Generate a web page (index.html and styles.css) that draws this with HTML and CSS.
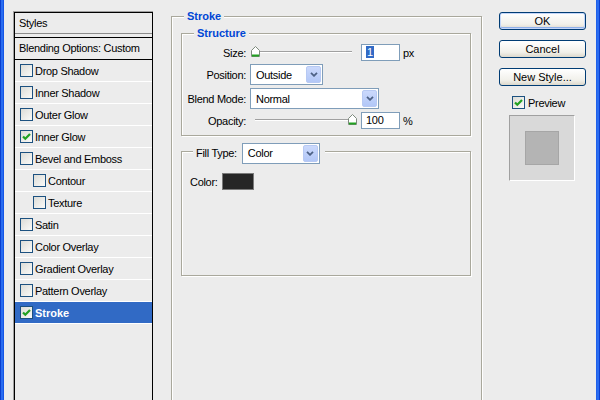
FILE: index.html
```html
<!DOCTYPE html>
<html lang="en">
<head>
    <meta charset="UTF-8">
    <title>Layer Style</title>
    <link rel="stylesheet" href="styles.css">
</head>
<body>
    <div class="window">
        <!-- list of effects -->
        <div class="styles-col">
            <div class="styles-list">
                <div class="styles-head">Styles</div>
                <div class="styles-blend">Blending Options: Custom</div>
                <div class="style-item"><span class="check"></span>Drop Shadow</div>
                <div class="style-item"><span class="check"></span>Inner Shadow</div>
                <div class="style-item"><span class="check"></span>Outer Glow</div>
                <div class="style-item"><span class="check"><svg width="11" height="11" viewBox="0 0 11 11"><path d="M2 5.5 L4.3 7.8 L9 3" fill="none" stroke="#21a121" stroke-width="2.2"/></svg></span>Inner Glow</div>
                <div class="style-item"><span class="check"></span>Bevel and Emboss</div>
                <div class="style-item style-sub"><span class="check"></span>Contour</div>
                <div class="style-item style-sub"><span class="check"></span>Texture</div>
                <div class="style-item"><span class="check"></span>Satin</div>
                <div class="style-item"><span class="check"></span>Color Overlay</div>
                <div class="style-item"><span class="check"></span>Gradient Overlay</div>
                <div class="style-item"><span class="check"></span>Pattern Overlay</div>
                <div class="style-item is-selected"><span class="check"><svg width="11" height="11" viewBox="0 0 11 11"><path d="M2 5.5 L4.3 7.8 L9 3" fill="none" stroke="#21a121" stroke-width="2.2"/></svg></span>Stroke</div>
            </div>
        </div>

        <!-- stroke options -->
        <div class="options-col">
            <div class="group group-stroke">
                <div class="group-title">Stroke</div>
                <div class="group group-structure">
                    <div class="group-title">Structure</div>
                    <div class="field-grid">
                        <div class="field-label">Size:</div>
                        <div class="field-row">
                            <div class="slider">
                                <div class="slider-track">
                                    <svg class="slider-thumb" style="left: 0%" width="9" height="11" viewBox="0 0 9 11"><path d="M0.5 10.5 V4.5 L4.5 0.5 L8.5 4.5 V10.5 Z" fill="#fff" stroke="#7d8a7d"/><path d="M1 9.5 H8" stroke="#21a121" stroke-width="2"/></svg>
                                </div>
                            </div>
                            <div class="num-input"><span class="sel">1</span></div>
                            <span class="unit">px</span>
                        </div>

                        <div class="field-label">Position:</div>
                        <div class="field-row">
                            <div class="select select-position">
                                <span class="select-text">Outside</span>
                                <span class="select-btn"><svg width="8" height="5" viewBox="0 0 8 5"><path d="M1 0.8 L4 3.8 L7 0.8" fill="none" stroke="#4d6185" stroke-width="1.8"/></svg></span>
                            </div>
                        </div>

                        <div class="field-label">Blend Mode:</div>
                        <div class="field-row">
                            <div class="select select-blend">
                                <span class="select-text">Normal</span>
                                <span class="select-btn"><svg width="8" height="5" viewBox="0 0 8 5"><path d="M1 0.8 L4 3.8 L7 0.8" fill="none" stroke="#4d6185" stroke-width="1.8"/></svg></span>
                            </div>
                        </div>

                        <div class="field-label">Opacity:</div>
                        <div class="field-row">
                            <div class="slider">
                                <div class="slider-track">
                                    <svg class="slider-thumb" style="left: 100%" width="9" height="11" viewBox="0 0 9 11"><path d="M0.5 10.5 V4.5 L4.5 0.5 L8.5 4.5 V10.5 Z" fill="#fff" stroke="#7d8a7d"/><path d="M1 9.5 H8" stroke="#21a121" stroke-width="2"/></svg>
                                </div>
                            </div>
                            <div class="num-input">100</div>
                            <span class="unit">%</span>
                        </div>
                    </div>
                </div>

                <div class="group group-fill">
                    <div class="group-title group-title-fill">
                        <span>Fill Type:</span>
                        <div class="select select-fill">
                            <span class="select-text">Color</span>
                            <span class="select-btn"><svg width="8" height="5" viewBox="0 0 8 5"><path d="M1 0.8 L4 3.8 L7 0.8" fill="none" stroke="#4d6185" stroke-width="1.8"/></svg></span>
                        </div>
                    </div>
                    <div class="color-row">
                        <span>Color:</span>
                        <span class="swatch"></span>
                    </div>
                </div>
            </div>
        </div>

        <!-- dialog buttons -->
        <div class="buttons-col">
            <div class="btn btn-default">OK</div>
            <div class="btn">Cancel</div>
            <div class="btn">New Style...</div>
            <div class="preview-row">
                <span class="check"><svg width="11" height="11" viewBox="0 0 11 11"><path d="M2 5.5 L4.3 7.8 L9 3" fill="none" stroke="#21a121" stroke-width="2.2"/></svg></span>
                <span>Preview</span>
            </div>
            <div class="preview-box">
                <div class="preview-square"></div>
            </div>
        </div>
    </div>
</body>
</html>
```

FILE: styles.css
```css
* {
    box-sizing: border-box;
}
body {
    margin: 0;
    overflow: hidden;
    background-color: #ececec;
    font-family: "Liberation Sans", Arial, sans-serif;
    font-size: 11px;
    letter-spacing: -0.3px;
    color: #000;
}
.window {
    display: flex;
    align-items: flex-start;
    width: 600px;
    height: 400px;
    padding: 0 4px;
    background: linear-gradient(to right, #0b3fcf 0, #0b3fcf 1px, #2a6cf0 1px, #2a6cf0 3px, #1556e6 3px, #1556e6 4px, transparent 4px, transparent 596px, #1556e6 596px, #2a6cf0 597px, #2a6cf0 599px, #0b3fcf 599px), #ececec;
}

/* effects list */
.styles-col {
    flex: none;
    width: 140px;
    margin: 11px 0 0 9px;
    border-left: 1px solid #a0a0a0;
    border-top: 1px solid #a0a0a0;
}
.styles-list {
    height: 400px;
    border: 1px solid #000;
}
.styles-head {
    height: 21px;
    line-height: 20px;
    padding-left: 4px;
    border-bottom: 1px solid #8c8c8c;
    margin-bottom: 3px;
}
.styles-blend {
    height: 23px;
    line-height: 21px;
    padding-left: 4px;
    border-top: 1px solid #000;
    border-bottom: 1px solid #000;
}
.style-item {
    display: flex;
    align-items: center;
    height: 22px;
    padding-left: 5px;
    border-bottom: 1px solid #fff;
}
.style-sub {
    padding-left: 18px;
}
.style-item.is-selected {
    background-color: #316ac5;
    color: #fff;
    font-weight: bold;
    letter-spacing: 0;
}
.check {
    flex: none;
    display: flex;
    align-items: center;
    justify-content: center;
    width: 13px;
    height: 13px;
    margin-right: 2px;
    border: 1px solid #1c5180;
    background: linear-gradient(135deg, #dcdcd7, #fafaf8);
}

/* group boxes */
.options-col {
    flex: none;
    width: 311px;
    margin-left: 18px;
}
.group {
    border: 1px solid #a9a89c;
    box-shadow: inset 1px 1px 0 #fff, 1px 1px 0 #fff;
}
.group-title {
    width: max-content;
    margin: -7px 0 0 12px;
    padding: 0 3px;
    line-height: 13px;
    background-color: #ececec;
    color: #0046d5;
    font-weight: bold;
    letter-spacing: 0;
}
.group-stroke {
    margin-top: 16px;
    height: 400px;
}
.group-structure {
    margin: 10px 10px 0 9px;
    padding-bottom: 6px;
}
.field-grid {
    display: grid;
    grid-template-columns: 64px auto;
    grid-template-rows: 17px 21px 21px 17px;
    column-gap: 4px;
    row-gap: 3px;
    margin-top: 4px;
}
.field-label {
    text-align: right;
    align-self: center;
}
.field-row {
    display: flex;
    align-items: center;
}
.slider {
    flex: none;
    width: 107px;
    height: 17px;
    padding: 7px 5px 0;
    margin-right: 4px;
}
.slider-track {
    position: relative;
    height: 2px;
    border-top: 1px solid #a0a0a0;
    background-color: #fff;
}
.slider-thumb {
    position: absolute;
    top: -6px;
    margin-left: -4px;
}
.num-input {
    flex: none;
    width: 39px;
    height: 17px;
    line-height: 15px;
    padding-left: 4px;
    margin-right: 3px;
    border: 1px solid #7f9db9;
    background-color: #fff;
}
.sel {
    background-color: #316ac5;
    color: #fff;
    padding: 0 1px;
}
.select {
    display: flex;
    align-items: center;
    height: 21px;
    padding: 1px;
    border: 1px solid #7f9db9;
    background-color: #fff;
    color: #000;
    font-weight: normal;
    letter-spacing: -0.3px;
}
.select-text {
    flex: 1;
    padding-left: 4px;
}
.select-btn {
    display: flex;
    align-items: center;
    justify-content: center;
    width: 15px;
    height: 17px;
    border: 1px solid #b7c9f3;
    border-radius: 2px;
    background: linear-gradient(#cbd9fc, #b2c7f7);
}
.select-position {
    width: 73px;
}
.select-blend {
    width: 129px;
}
.select-fill {
    width: 78px;
}
.group-fill {
    margin: 15px 10px 0 9px;
    height: 125px;
    padding-left: 8px;
}
.group-title-fill {
    display: flex;
    align-items: center;
    gap: 5px;
    margin: -9px 0 0 3px;
    padding: 0 5px 0 3px;
    color: #000;
    font-weight: normal;
    letter-spacing: -0.3px;
}
.color-row {
    display: flex;
    align-items: center;
    gap: 4px;
    margin-top: 9px;
    height: 17px;
}
.swatch {
    width: 32px;
    height: 17px;
    border: 1px solid #7a7a7a;
    background-color: #262626;
}

/* buttons */
.buttons-col {
    flex: none;
    display: flex;
    flex-direction: column;
    width: 87px;
    margin: 12px 0 0 17px;
}
.btn {
    height: 18px;
    line-height: 16px;
    margin-bottom: 10px;
    text-align: center;
    border: 1px solid #003c74;
    border-radius: 3px;
    background: linear-gradient(#ffffff, #f1f0ea 70%, #dcd8cc);
    letter-spacing: 0;
}
.btn-default {
    box-shadow: inset 0 0 0 1px #c4d6f8, inset 0 -1px 0 1px #8fb0ea;
}
.preview-row {
    display: flex;
    align-items: center;
    height: 13px;
    margin: 0 0 6px 13px;
}
.preview-row .check {
    margin-right: 3px;
}
.preview-box {
    display: flex;
    align-items: center;
    justify-content: center;
    width: 66px;
    height: 66px;
    margin-left: 10px;
    border: 1px solid;
    border-color: #a0a0a0 #fff #fff #a0a0a0;
    background-color: #d9d9d9;
}
.preview-square {
    width: 34px;
    height: 34px;
    border: 1px solid #a6a6a6;
    background-color: #b4b4b4;
}
```
